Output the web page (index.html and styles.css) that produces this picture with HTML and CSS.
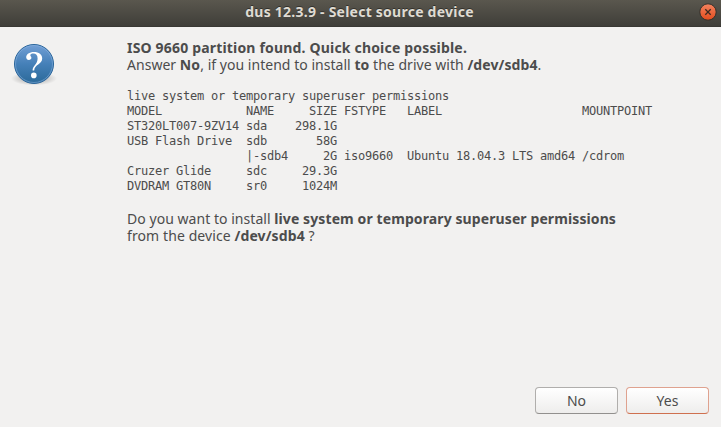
FILE: index.html
```html
<!DOCTYPE html>
<html lang="en">
<head>
<meta charset="utf-8">
<title>dus 12.3.9 - Select source device</title>
<link rel="stylesheet" href="styles.css">
</head>
<body>
<div class="window">
  <header class="titlebar">
    <h1 class="title">dus 12.3.9 - Select source device</h1>
    <button class="close" aria-label="Close">
      <svg viewBox="0 0 18 18" width="18" height="18">
        <defs><linearGradient id="closeFill" x2="0" y2="1"><stop offset="0" stop-color="#f48460"/><stop offset="1" stop-color="#e34b1c"/></linearGradient></defs>
        <circle cx="9" cy="9" r="8.2" fill="url(#closeFill)" stroke="#33312c"/>
        <path d="M6.3 6.3l5.4 5.4m0-5.4l-5.4 5.4" stroke="#3b2a20" stroke-width="1.3"/>
      </svg>
    </button>
  </header>
  <main class="content">
    <svg class="icon" viewBox="0 0 48 48" width="48" height="48">
      <defs>
        <linearGradient id="ball" x2="0" y2="1"><stop offset="0" stop-color="#729fd5"/><stop offset=".5" stop-color="#4580b8"/><stop offset="1" stop-color="#2b6999"/></linearGradient>
        <radialGradient id="shade"><stop offset="0" stop-color="#000" stop-opacity=".3"/><stop offset=".65" stop-color="#000" stop-opacity=".13"/><stop offset="1" stop-color="#000" stop-opacity="0"/></radialGradient>
      </defs>
      <ellipse cx="24" cy="38.5" rx="23" ry="7" fill="url(#shade)"/>
      <circle cx="24" cy="24" r="19.5" fill="url(#ball)" stroke="#2a659b"/>
      <circle cx="24" cy="24" r="18.5" fill="none" stroke="#8fb8e3" stroke-opacity=".5"/>
      <path d="M22.6 30.5C22.4 25.8 27.6 24.5 27.6 18.4C27.6 15.2 26 13.5 23.4 13.5C21.5 13.5 20.3 14.2 20.3 15.2C20.3 16.1 21.4 16.5 21.4 17.8C21.4 19.1 20.3 20 18.9 20C17.3 20 16.2 18.9 16.2 17.3C16.2 14.2 19.3 11.9 23.9 11.9C29 11.9 32.2 14.3 32.2 18.4C32.2 24.2 24.3 24.4 24.2 30.5Z" fill="#fff"/>
      <circle cx="23.8" cy="35.4" r="2.8" fill="#fff"/>
    </svg>
    <div class="message">
      <p><b class="headline">ISO 9660 partition found. Quick choice possible.</b></p>
      <p class="answer">Answer <b>No</b>, if you intend to install <b>to</b> the drive with <b>/dev/sdb4</b>.</p>
<pre class="listing">live system or temporary superuser permissions
MODEL            NAME     SIZE FSTYPE   LABEL                    MOUNTPOINT
ST320LT007-9ZV14 sda    298.1G
USB Flash Drive  sdb       58G
                 |-sdb4     2G iso9660  Ubuntu 18.04.3 LTS amd64 /cdrom
Cruzer Glide     sdc     29.3G
DVDRAM GT80N     sr0     1024M</pre>
      <p class="question">Do you want to install <b>live system or temporary superuser permissions</b></p>
      <p class="device">from the device <b>/dev/sdb4</b> ?</p>
    </div>
  </main>
  <footer class="actions">
    <button class="button">No</button>
    <button class="button default">Yes</button>
  </footer>
</div>
</body>
</html>
```
FILE: styles.css
```css
* { box-sizing: border-box; }
body { margin: 0; }
.window {
  display: flex;
  flex-direction: column;
  width: 721px;
  height: 427px;
  background: #f2f1f0;
  color: #4c4c4c;
  font-family: "Noto Sans", sans-serif;
  font-size: 14px;
}
.titlebar {
  display: grid;
  grid-template-columns: 1fr 22px;
  height: 27px;
  padding-right: 2px;
  background: linear-gradient(#5a574e, #3f3e39);
  border-bottom: 1px solid #393834;
}
.title {
  margin: 0;
  padding-left: 22px;
  text-align: center;
  font-size: 14px;
  line-height: 24px;
  font-weight: 700;
  letter-spacing: .24px;
  color: #dfdbd2;
  text-shadow: 0 -1px #33312c;
  white-space: nowrap;
}
.close { margin: 3px 0 0 2px; padding: 0; width: 18px; height: 18px; border: 0; background: none; }
.close svg { display: block; }
.content { display: flex; flex: 1; padding: 12px 10px 0; }
.icon { flex: none; margin-top: 1px; }
.message { margin-left: 69px; }
p { margin: 0; line-height: 17px; white-space: nowrap; }
b { font-weight: 700; letter-spacing: .1px; }
.headline { letter-spacing: .18px; }
.answer { letter-spacing: .03px; }
.question { letter-spacing: .04px; }
.device { letter-spacing: .1px; }
.listing {
  margin: 16px 0 16px;
  font: 12px/15px "DejaVu Sans Mono", monospace;
  letter-spacing: -.224px;
}
.actions { display: flex; justify-content: flex-end; gap: 8px; padding: 0 12px 13px 0; }
.button {
  width: 83px;
  height: 27px;
  padding: 0;
  border: 1px solid #b0aeac;
  border-bottom-color: #92908e;
  border-radius: 4px;
  background: linear-gradient(#fff, #eeedec);
  color: #4c4c4c;
  font: 14px/24px "Noto Sans", sans-serif;
}
.button.default { border-color: #dfa28f; border-bottom-color: #cf704f; }
```
